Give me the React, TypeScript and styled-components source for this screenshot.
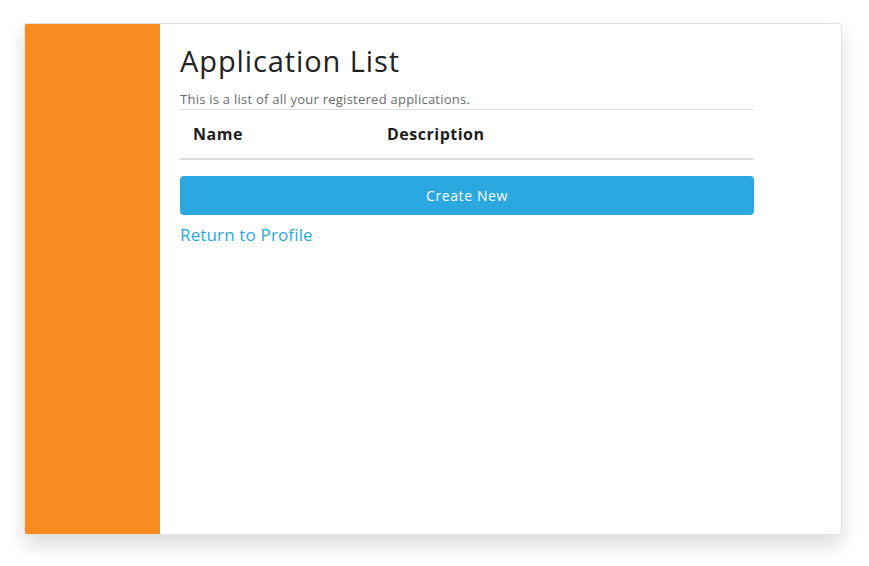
import React from 'react';
import styled, { createGlobalStyle } from 'styled-components';

const GlobalStyle = createGlobalStyle`
  body {
    margin: 0;
    background: #ffffff;
    font-family: "Open Sans", "Liberation Sans", sans-serif;
  }
`;

const Page = styled.div`
  min-height: 566px;
  box-sizing: border-box;
  padding: 23px 0 31px 24px;
`;

const Card = styled.div`
  display: flex;
  width: 818px;
  height: 512px;
  box-sizing: border-box;
  border: 1px solid #e2e2e2;
  border-radius: 3px;
  overflow: hidden;
  background: #ffffff;
  box-shadow: 0 10px 20px rgba(0, 0, 0, 0.14);
`;

const Sidebar = styled.div`
  width: 135px;
  flex-shrink: 0;
  background: #f68b1f;
`;

const Content = styled.div`
  width: 574px;
  padding: 17px 0 0 20px;
  display: flex;
  flex-direction: column;
`;

const Title = styled.h1`
  margin: 0;
  font-size: 29px;
  font-weight: 400;
  letter-spacing: 0.9px;
  color: #222222;
  line-height: 40px;
`;

const Subtitle = styled.p`
  margin: 10px 0 0;
  font-size: 13px;
  letter-spacing: 0.25px;
  color: #6c6c6c;
  line-height: 16px;
  padding-bottom: 2px;
`;

const Table = styled.table`
  width: 100%;
  border-collapse: collapse;
  border-top: 1px solid #dedede;
  border-bottom: 2px solid #dedede;
`;

const HeadCell = styled.th<{ $width?: string }>`
  text-align: left;
  font-size: 16px;
  font-weight: 700;
  letter-spacing: 0.5px;
  color: #1e1e1e;
  height: 48px;
  padding: 0 13px;
  width: ${(p) => p.$width ?? 'auto'};
`;

const CreateButton = styled.button`
  margin-top: 16px;
  height: 39px;
  width: 100%;
  border: none;
  border-radius: 4px;
  background: #2ba8e0;
  color: #ffffff;
  font-family: inherit;
  font-size: 14px;
  letter-spacing: 0.6px;
  cursor: pointer;
`;

const BackLink = styled.a`
  margin-top: 9px;
  font-size: 17px;
  letter-spacing: 0.15px;
  color: #2ba8e0;
  text-decoration: none;
  line-height: 22px;
`;

export default function App() {
  return (
    <>
      <GlobalStyle />
      <Page>
        <Card>
          <Sidebar />
          <Content>
            <Title>Application List</Title>
            <Subtitle>This is a list of all your registered applications.</Subtitle>
            <Table>
              <thead>
                <tr>
                  <HeadCell $width="168px">Name</HeadCell>
                  <HeadCell>Description</HeadCell>
                </tr>
              </thead>
            </Table>
            <CreateButton>Create New</CreateButton>
            <BackLink href="#">Return to Profile</BackLink>
          </Content>
        </Card>
      </Page>
    </>
  );
}
